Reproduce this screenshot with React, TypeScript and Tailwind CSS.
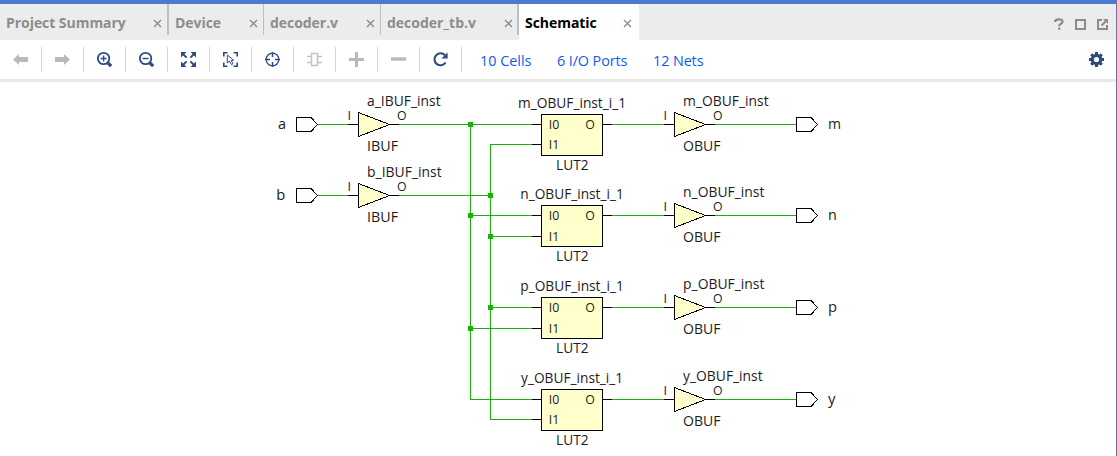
import type { ReactNode } from 'react';

const GREEN = '#1bb10a';
const INK = '#000';
const FILL = '#ffffcc';
const NAVY = '#2d4b80';
const GREY = '#b9b9b9';

function CloseIcon() {
  return (
    <svg width="9" height="9" viewBox="0 0 9 9" className="mt-0.5 shrink-0">
      <path d="M1 1 L8 8 M8 1 L1 8" stroke="#8a8a8a" strokeWidth="1.3" fill="none" />
    </svg>
  );
}

function Tab({ label, className, textClass }: { label: string; className: string; textClass: string }) {
  return (
    <div className={`flex shrink-0 items-center justify-between ${className}`}>
      <span className={`whitespace-nowrap text-[14px] leading-[20px] font-bold ${textClass}`}>{label}</span>
      <CloseIcon />
    </div>
  );
}

function Tool({ children }: { children: ReactNode }) {
  return (
    <div className="flex h-[25px] w-[42px] shrink-0 items-center justify-center border-r border-[#d4d4d4]">
      <svg width="17" height="17" viewBox="0 0 17 17" fill="none">
        {children}
      </svg>
    </div>
  );
}

function Label({ x, y, w, s = 14.4, children }: { x: number; y: number; w: number; s?: number; children: string }) {
  return (
    <text x={x + 0.6} y={y} fontSize={s} textLength={w} lengthAdjust="spacingAndGlyphs" fill="#1c1c1c">
      {children}
    </text>
  );
}

function Wire({ d, color = GREEN }: { d: string; color?: string }) {
  return <path d={d} stroke={color} fill="none" shapeRendering="crispEdges" />;
}

function Port({ x, y }: { x: number; y: number }) {
  return (
    <path
      d={`M${x + 0.5} ${y - 6.5} h14.5 l6.5 7 l-6.5 7 h-14.5 z`}
      stroke={INK}
      fill="#fff"
      shapeRendering="crispEdges"
    />
  );
}

function Buffer({ x, y, name, w, kind, kw }: { x: number; y: number; name: string; w: number; kind: string; kw: number }) {
  return (
    <g>
      <Wire color={INK} d={`M${x - 10} ${y + 0.5} h10 M${x + 31} ${y + 0.5} h10`} />
      <path
        d={`M${x + 0.5} ${y - 11.5} l31 12 l-31 12 z`}
        stroke={INK}
        fill={FILL}
        shapeRendering="crispEdges"
      />
      <Label x={x + 8.5} y={y - 18} w={w}>{name}</Label>
      <Label x={x - 11.2} y={y - 4} w={3.5} s={12.2}>I</Label>
      <Label x={x + 38.3} y={y - 4} w={9.6} s={12.2}>O</Label>
      <Label x={x + 8.5} y={y + 27} w={kw}>{kind}</Label>
    </g>
  );
}

function Lut({ y, pin, name, x, w }: { y: number; pin: number; name: string; x: number; w: number }) {
  return (
    <g>
      <Wire color={INK} d={`M532 ${y + 0.5} h9 M532 ${pin + 0.5} h9 M603 ${y + 0.5} h9`} />
      <rect x="541.5" y={y - 9.5} width="61" height="41" stroke={INK} fill={FILL} shapeRendering="crispEdges" />
      <Label x={x} y={y - 16} w={w}>{name}</Label>
      <Label x={548.2} y={y + 4.5} w={10.5} s={12.2}>I0</Label>
      <Label x={548.2} y={pin + 4.5} w={10.5} s={12.2}>I1</Label>
      <Label x={584.6} y={y + 4.5} w={9.6} s={12.2}>O</Label>
      <Label x={555.5} y={y + 46} w={32.5}>LUT2</Label>
    </g>
  );
}

const outputs = [
  { id: 'm', y: 124, pin: 144, lx: 517.5, lw: 108, ow: 85.5, pw: 13 },
  { id: 'n', y: 215, pin: 236, lx: 519.7, lw: 103.5, ow: 81.3, pw: 8.8 },
  { id: 'p', y: 307, pin: 328, lx: 519.7, lw: 103.5, ow: 81.3, pw: 9 },
  { id: 'y', y: 399, pin: 419, lx: 520.5, lw: 102, ow: 79.5, pw: 7.5 },
];

const dots = [
  [470, 124], [470, 215], [470, 328], [490, 195], [490, 236], [490, 307],
];

function Schematic() {
  return (
    <svg width="1116" height="374" viewBox="0 82 1116 374" className="block" fontFamily="'Open Sans', sans-serif">
      <Wire d="M317 124.5 H349 M399 124.5 H532" />
      <Wire d="M317 195.5 H349 M399 195.5 H491" />
      <Wire d="M470.5 124 V399.5 H532 M470 215.5 H532 M470 328.5 H532" />
      <Wire d="M532 144.5 H490.5 V419.5 H532 M490 236.5 H532 M490 307.5 H532" />
      {dots.map(([x, y]) => (
        <rect key={`${x}-${y}`} x={x - 2} y={y - 2} width="5" height="5" fill={GREEN} />
      ))}
      <Label x={277.3} y={129} w={8}>a</Label>
      <Label x={275.6} y={200} w={9}>b</Label>
      <Port x={296} y={124} />
      <Port x={296} y={195} />
      <Buffer x={358} y={124} name="a_IBUF_inst" w={73.5} kind="IBUF" kw={31} />
      <Buffer x={358} y={195} name="b_IBUF_inst" w={74.5} kind="IBUF" kw={31} />
      {outputs.map((o) => (
        <g key={o.id}>
          <Wire d={`M612 ${o.y + 0.5} H664 M714 ${o.y + 0.5} H796`} />
          <Lut y={o.y} pin={o.pin} name={`${o.id}_OBUF_inst_i_1`} x={o.lx} w={o.lw} />
          <Buffer x={674} y={o.y} name={`${o.id}_OBUF_inst`} w={o.ow} kind="OBUF" kw={37.5} />
          <Port x={796} y={o.y} />
          <Label x={827.5} y={o.y + 5} w={o.pw}>{o.id}</Label>
        </g>
      ))}
    </svg>
  );
}

export default function App() {
  return (
    <div className="flex h-[456px] w-[1117px] flex-col overflow-hidden border-t-4 border-r border-[#4a7bd0] bg-white font-['Open_Sans',sans-serif]">
      <div className="flex h-[36px] shrink-0 bg-[#ececec]">
        <div className="flex h-[31px] text-[#8d8d8d]">
          <Tab label="Project Summary" className="w-[169px] border-r-2 border-[#bfbfbf] pt-1.5 pr-[5px] pl-1.5" textClass="tracking-[-0.05px]" />
          <Tab label="Device" className="w-[95px] border-r border-[#bfbfbf] pt-1.5 pr-[5px] pl-1.5" textClass="tracking-[-0.05px]" />
          <Tab label="decoder.v" className="w-[117px] border-r border-[#bfbfbf] pt-1.5 pr-[5px] pl-1.5" textClass="tracking-[-0.05px]" />
          <Tab label="decoder_tb.v" className="w-[138px] border-r-2 border-[#bfbfbf] pt-1.5 pr-1 pl-1.5" textClass="tracking-[-0.02px]" />
        </div>
        <Tab label="Schematic" className="h-[36px] w-[120px] bg-white pr-[7px] pl-1.5 pt-px" textClass="text-black tracking-[-0.05px]" />
        <div className="flex flex-1 items-center justify-end pr-[8px] pt-1">
          <svg width="54" height="14" viewBox="0 0 54 14" fill="none" stroke="#8c8c8c" strokeWidth="2">
            <path d="M1 5 C1 1.6 8.6 1.4 8.6 4.6 C8.6 7 5.2 6.6 5.2 9.2 M5.2 10.6 v2.2" strokeWidth="2.2" />
            <path d="M22 3 h9 v9 h-9 z" />
            <path d="M48 3 h-4 v9 h9 v-4" />
            <path d="M47.5 8.5 L52 4" />
            <path d="M49 2 h5 v5 z" fill="#8c8c8c" stroke="none" />
          </svg>
        </div>
      </div>

      <div className="flex h-[42px] shrink-0 items-center border-b-[3px] border-[#e8e8e8]">
        <Tool>
          <path d="M1 8.5 L7 3 V6 H16 V11 H7 V14 Z" fill={GREY} />
        </Tool>
        <Tool>
          <path d="M16 8.5 L10 3 V6 H1 V11 H10 V14 Z" fill={GREY} />
        </Tool>
        <Tool>
          <circle cx="7.6" cy="7.5" r="5.7" stroke={NAVY} strokeWidth="1.8" />
          <path d="M4.6 7.5 h6 M7.6 4.5 v6" stroke={NAVY} strokeWidth="1.4" />
          <path d="M11.8 11.8 L15.2 15.2" stroke={NAVY} strokeWidth="3.2" />
        </Tool>
        <Tool>
          <circle cx="7.6" cy="7.5" r="5.7" stroke={NAVY} strokeWidth="1.8" />
          <path d="M4.6 7.5 h6" stroke={NAVY} strokeWidth="1.4" />
          <path d="M11.8 11.8 L15.2 15.2" stroke={NAVY} strokeWidth="3.2" />
        </Tool>
        <Tool>
          <path d="M1 1 h5.5 L1 6.5 z M16 1 h-5.5 L16 6.5 z M1 16 h5.5 L1 10.5 z M16 16 h-5.5 L16 10.5 z" fill={NAVY} />
          <path d="M3 3 L6.6 6.6 M14 3 L10.4 6.6 M3 14 L6.6 10.4 M14 14 L10.4 10.4" stroke={NAVY} strokeWidth="1.9" />
        </Tool>
        <Tool>
          <path d="M1.8 5.5 V1.8 H5.5 M11.5 1.8 H15.2 V5.5 M1.8 11.5 V15.2 H5.5 M11.5 15.2 H15.2 V11.5" stroke={NAVY} strokeWidth="1.6" />
          <path d="M5.3 4 L5.3 12 L7.4 10.2 L9.4 13.6 L11 12.8 L9.2 9.5 L11.6 9.2 Z" stroke={NAVY} />
        </Tool>
        <Tool>
          <circle cx="8.5" cy="8.5" r="6.3" stroke={NAVY} strokeWidth="1.3" />
          <path d="M8.5 1 v5 M8.5 11 v5 M1 8.5 h5 M11 8.5 h5" stroke={NAVY} strokeWidth="1.5" />
        </Tool>
        <Tool>
          <path d="M5.5 2.5 h6 v12 h-6 z M1 5.5 h4.5 M1 11.5 h4.5 M11.5 5.5 h4.5 M11.5 11.5 h4.5" stroke="#c2c2c2" strokeWidth="1.5" />
        </Tool>
        <Tool>
          <path d="M8.5 1 v15 M1 8.5 h15" stroke={GREY} strokeWidth="3" />
        </Tool>
        <Tool>
          <path d="M1 8 h15" stroke={GREY} strokeWidth="3.4" />
        </Tool>
        <Tool>
          <path d="M13 4.3 A6 6 0 1 0 13.6 11.5" stroke={NAVY} strokeWidth="2.1" />
          <path d="M15.6 1.5 V7.6 H9.5 Z" fill={NAVY} />
        </Tool>
        <div className="flex flex-1 pt-0.5 pl-[18px] text-[14.4px] leading-[20px] whitespace-nowrap text-[#0f5bf0]">
          <span className="w-[77px]">10 Cells</span>
          <span className="w-[96px] tracking-[-0.1px]">6 I/O Ports</span>
          <span className="tracking-[-0.1px]">12 Nets</span>
        </div>
        <svg width="17" height="17" viewBox="0 0 17 17" className="mr-[11px]">
          <circle cx="8.5" cy="8.5" r="4.2" fill="none" stroke={NAVY} strokeWidth="3.2" />
          <path
            d="M8.5 1 V4 M8.5 13 V16 M1 8.5 H4 M13 8.5 H16 M3.2 3.2 L5 5 M12 12 L13.8 13.8 M3.2 13.8 L5 12 M12 5 L13.8 3.2"
            stroke={NAVY}
            strokeWidth="3"
          />
        </svg>
      </div>

      <Schematic />
    </div>
  );
}
